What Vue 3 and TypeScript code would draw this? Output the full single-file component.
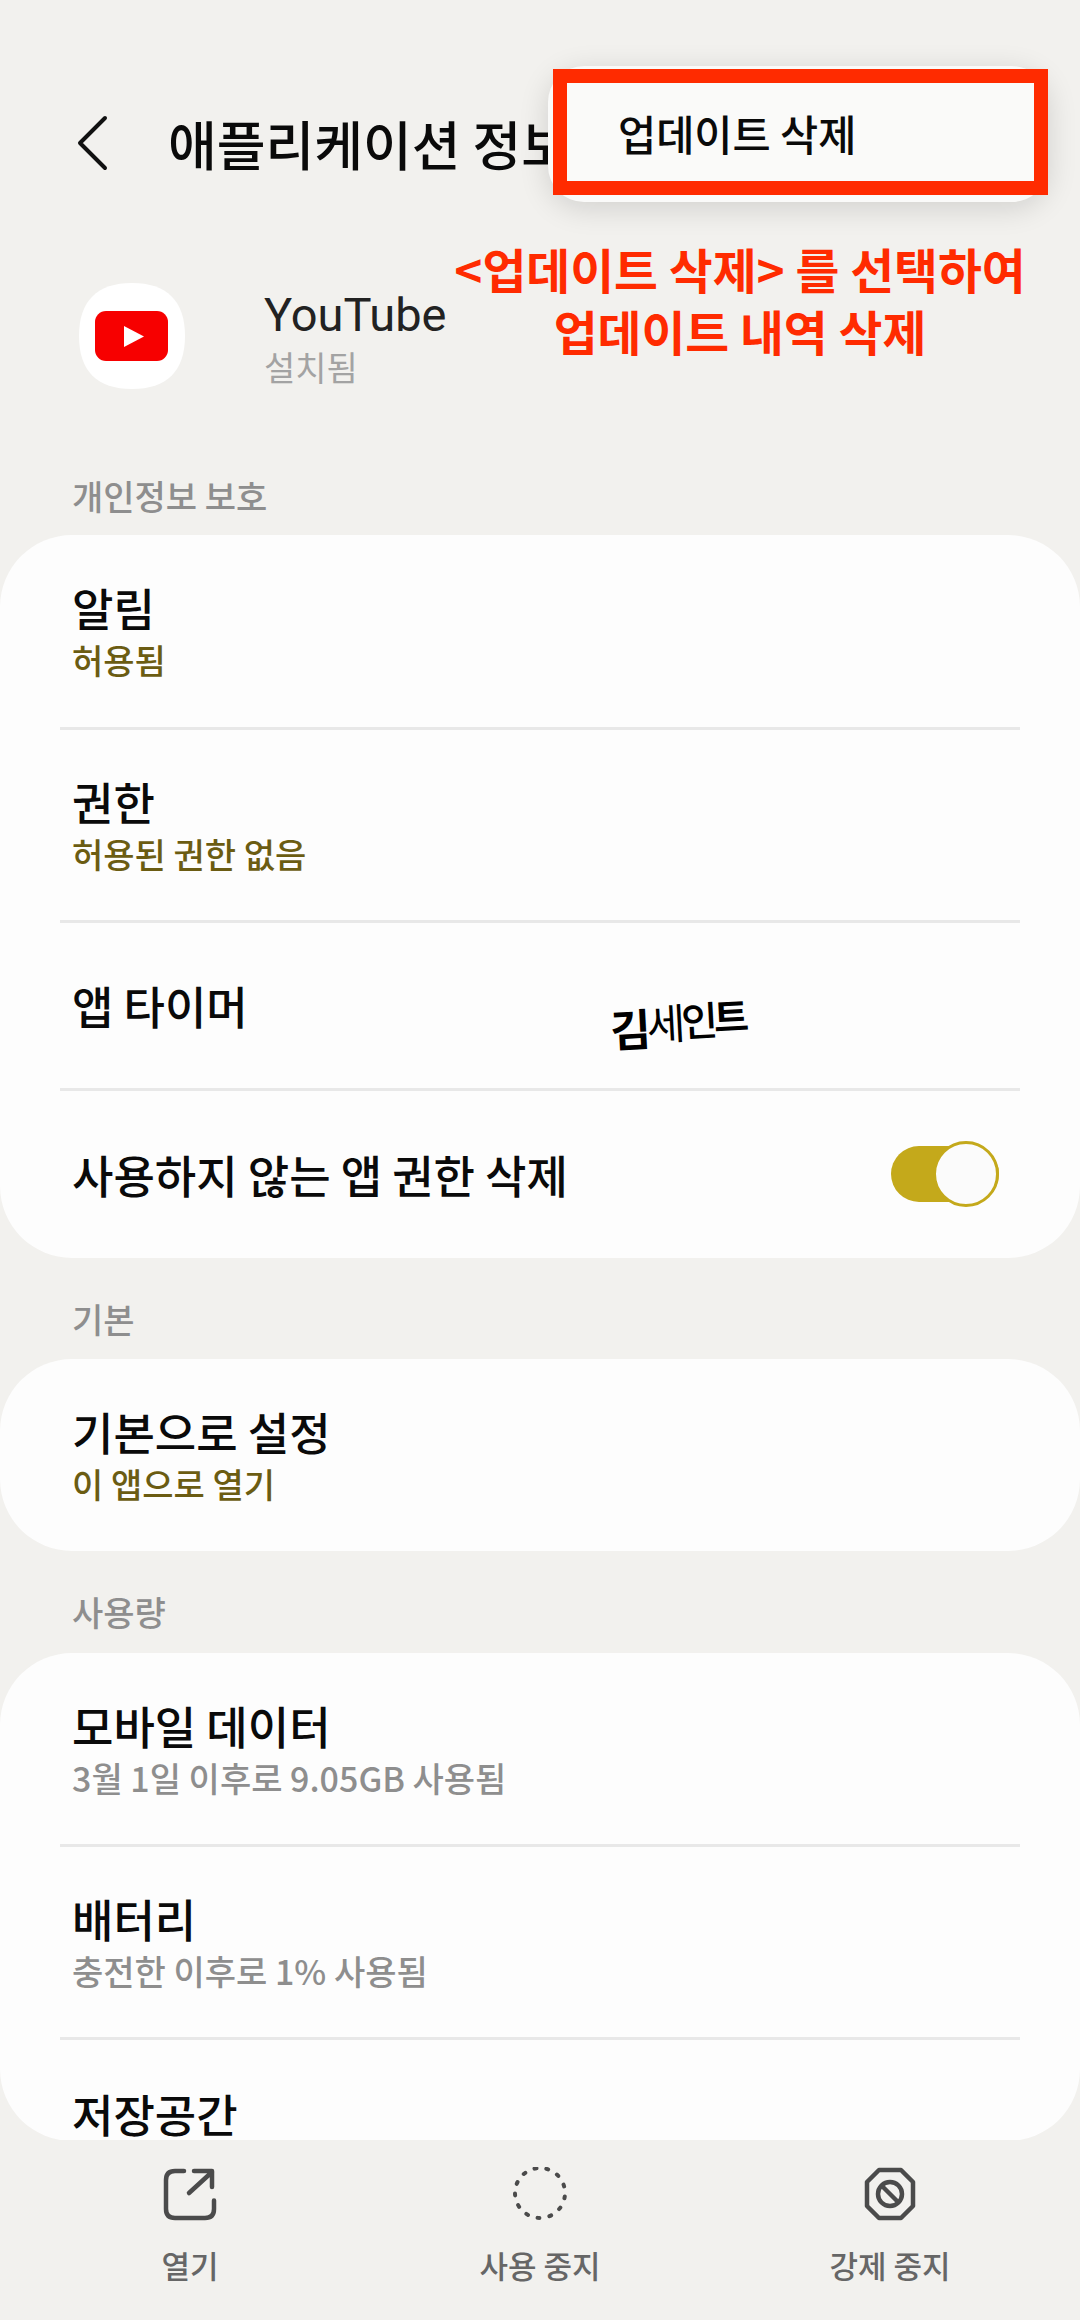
<script setup lang="ts">
interface Row {
  title: string;
  sub?: string;
  subTone?: 'olive' | 'grey';
  toggle?: boolean;
  height: number;
}
interface Section {
  label: string;
  labelHeight: number;
  rows: Row[];
  clipped?: boolean;
}

const sections: Section[] = [
  {
    label: '개인정보 보호',
    labelHeight: 100,
    rows: [
      { title: '알림', sub: '허용됨', subTone: 'olive', height: 195 },
      { title: '권한', sub: '허용된 권한 없음', subTone: 'olive', height: 193 },
      { title: '앱 타이머', height: 168 },
      { title: '사용하지 않는 앱 권한 삭제', toggle: true, height: 167 },
    ],
  },
  {
    label: '기본',
    labelHeight: 101,
    rows: [{ title: '기본으로 설정', sub: '이 앱으로 열기', subTone: 'olive', height: 192 }],
  },
  {
    label: '사용량',
    labelHeight: 102,
    clipped: true,
    rows: [
      { title: '모바일 데이터', sub: '3월 1일 이후로 9.05GB 사용됨', subTone: 'grey', height: 194 },
      { title: '배터리', sub: '충전한 이후로 1% 사용됨', subTone: 'grey', height: 193 },
      // the line under this title is scrolled away behind the bottom bar
      { title: '저장공간', sub: '', height: 194 },
    ],
  },
];

// handwritten signature, each letter has its own size and weight
const signLetters = [
  { char: '김', size: 44, weight: 700, shift: 4 },
  { char: '세', size: 42, weight: 400, shift: 0 },
  { char: '인', size: 40, weight: 500, shift: -1 },
  { char: '트', size: 38, weight: 700, shift: -3 },
];
</script>

<template>
  <div class="page">
    <div class="content">
      <header class="top">
        <svg class="back" viewBox="0 0 32 56" width="32" height="56">
          <path d="M29 3 L4 28 L29 53" fill="none" stroke="#111" stroke-width="4" stroke-linecap="round" stroke-linejoin="round" />
        </svg>
        <h1 class="title">애플리케이션 정보</h1>
      </header>

      <div class="app">
        <svg class="app-icon" viewBox="0 0 106 106" width="106" height="106">
          <path d="M53 0 C88 0 106 18 106 53 C106 88 88 106 53 106 C18 106 0 88 0 53 C0 18 18 0 53 0 Z" fill="#fff" />
          <rect x="16" y="28" width="73" height="50" rx="11" fill="#f70000" />
          <path d="M45 43 L65 53.5 L45 64 Z" fill="#fff" />
        </svg>
        <div>
          <div class="app-name">YouTube</div>
          <div class="app-state">설치됨</div>
        </div>
      </div>

      <section v-for="section in sections" :key="section.label">
        <div class="section-label" :style="{ height: section.labelHeight + 'px' }">{{ section.label }}</div>
        <div class="card" :class="{ clipped: section.clipped }">
          <div
            v-for="row in section.rows"
            :key="row.title"
            class="row"
            :style="{ height: row.height + 'px' }"
          >
            <div class="row-text">
              <div class="row-title">{{ row.title }}</div>
              <div v-if="row.sub !== undefined" class="row-sub" :class="row.subTone">{{ row.sub }}</div>
            </div>
            <div v-if="row.toggle" class="toggle"><span class="knob"></span></div>
          </div>
        </div>
      </section>
    </div>

    <nav class="bottom">
      <div class="action">
        <svg viewBox="0 0 56 56" width="56" height="56" fill="none" stroke="#4b4b4b" stroke-width="4.5" stroke-linecap="round" stroke-linejoin="round">
          <path d="M22 4 H13 C7 4 4 7 4 13 V42 C4 48 7 51 13 51 H43 C49 51 52 48 52 42 V33.5" />
          <path d="M27 26 L50 5 M32 4 H50 V20" />
        </svg>
        <span>열기</span>
      </div>
      <div class="action">
        <svg viewBox="0 0 56 56" width="56" height="56" fill="none" stroke="#4b4b4b" stroke-width="4" stroke-linecap="round">
          <circle cx="28" cy="26" r="25" pathLength="13" stroke-dasharray="0.16 0.84" transform="rotate(8 28 26)" />
        </svg>
        <span>사용 중지</span>
      </div>
      <div class="action">
        <svg viewBox="0 0 56 56" width="56" height="56" fill="none" stroke="#4b4b4b" stroke-width="4.5" stroke-linecap="round" stroke-linejoin="round">
          <path d="M17 3 H39 L51 15 V39 L39 51 H17 L5 39 V15 Z" />
          <circle cx="28" cy="27" r="12" />
          <path d="M20 19 L36 35" />
        </svg>
        <span>강제 중지</span>
      </div>
    </nav>

    <div class="popup">
      <div class="popup-item">업데이트 삭제</div>
    </div>
    <div class="note">&lt;업데이트 삭제&gt; 를 선택하여<br />업데이트 내역 삭제</div>
    <div class="sign">
      <span
        v-for="letter in signLetters"
        :key="letter.char"
        :style="{ fontSize: letter.size + 'px', fontWeight: letter.weight, transform: `translateY(${letter.shift}px)` }"
      >{{ letter.char }}</span>
    </div>
  </div>
</template>

<style scoped>
.page {
  position: relative;
  width: 1080px;
  height: 2320px;
  display: flex;
  flex-direction: column;
  overflow: hidden;
  background: #f2f1ee;
  color: #0a0a0a;
  font-family: "Noto Sans CJK KR", "Noto Sans", sans-serif;
}
.content {
  height: 2140px;
  overflow: hidden;
  flex: none;
}
.top {
  height: 283px;
  box-sizing: border-box;
  padding: 115px 0 0 76px;
  display: flex;
  align-items: flex-start;
  gap: 60px;
}
.back {
  flex: none;
}
.title {
  margin: -8px 0 0;
  font-size: 53px;
  line-height: 72px;
  font-weight: 500;
  white-space: nowrap;
}
.app {
  height: 152px;
  padding-left: 79px;
  display: flex;
  align-items: flex-start;
  gap: 79px;
}
.app-icon {
  flex: none;
}
.app-name {
  margin-top: 4px;
  font-family: Roboto, "Noto Sans", sans-serif;
  font-size: 47px;
  line-height: 56px;
  font-weight: 400;
  color: #222;
}
.app-state {
  font-size: 34px;
  line-height: 48px;
  color: #a3a3a3;
}
.section-label {
  box-sizing: border-box;
  padding: 39px 0 0 72px;
  font-size: 34px;
  line-height: 44px;
  font-weight: 500;
  color: #8e8e8e;
}
.card {
  background: #fdfdfd;
  border-radius: 72px;
  padding: 0 60px;
  overflow: hidden;
}
.row {
  box-sizing: border-box;
  display: flex;
  align-items: center;
  justify-content: space-between;
  border-bottom: 3px solid #e8e8e8;
  padding: 0 0 0 12px;
}
.row:last-child {
  border-bottom: 0;
}
.clipped {
  height: 488px;
}
.row-title {
  font-size: 45px;
  line-height: 58px;
  font-weight: 500;
}
.row-sub {
  min-height: 46px;
  font-size: 34px;
  line-height: 46px;
  font-weight: 500;
}
.olive {
  color: #6b5c12;
}
.grey {
  color: #8e8e8e;
}
.toggle {
  position: relative;
  width: 108px;
  height: 56px;
  margin: 0 21px 2px 0;
  border-radius: 28px;
  background: #c4a91b;
}
.knob {
  position: absolute;
  top: -5px;
  right: 0;
  box-sizing: border-box;
  width: 66px;
  height: 66px;
  border-radius: 50%;
  border: 3px solid #c4a91b;
  background: #fbfbfb;
}
.bottom {
  flex: 1;
  box-sizing: border-box;
  padding: 27px 15px 0;
  display: grid;
  grid-template-columns: repeat(3, 1fr);
  align-items: start;
}
.action {
  display: flex;
  flex-direction: column;
  align-items: center;
  gap: 20px;
  font-size: 31px;
  line-height: 44px;
  font-weight: 500;
  color: #666;
}
.popup {
  position: absolute;
  top: 66px;
  left: 548px;
  width: 500px;
  height: 136px;
  box-sizing: border-box;
  border-radius: 36px;
  background: #fafaf9;
  box-shadow: 0 6px 30px rgba(0, 0, 0, 0.14);
}
.popup-item {
  position: absolute;
  top: 3px;
  left: 5px;
  width: 495px;
  height: 126px;
  box-sizing: border-box;
  border: 14px solid #ff2b00;
  padding: 0 0 0 51px;
  line-height: 100px;
  font-size: 41.5px;
  font-weight: 500;
  color: #0a0a0a;
}
.note {
  position: absolute;
  top: 238px;
  left: 440px;
  width: 600px;
  text-align: center;
  font-size: 47.7px;
  line-height: 62px;
  font-weight: 700;
  color: #ff2b00;
}
.sign {
  position: absolute;
  top: 989px;
  left: 610px;
  display: flex;
  align-items: center;
  height: 64px;
  line-height: 64px;
  letter-spacing: -4px;
  color: #000;
  transform: rotate(-3deg);
}
.sign span {
  display: inline-block;
}
</style>

<style>
body {
  background: #f2f1ee;
}
</style>
